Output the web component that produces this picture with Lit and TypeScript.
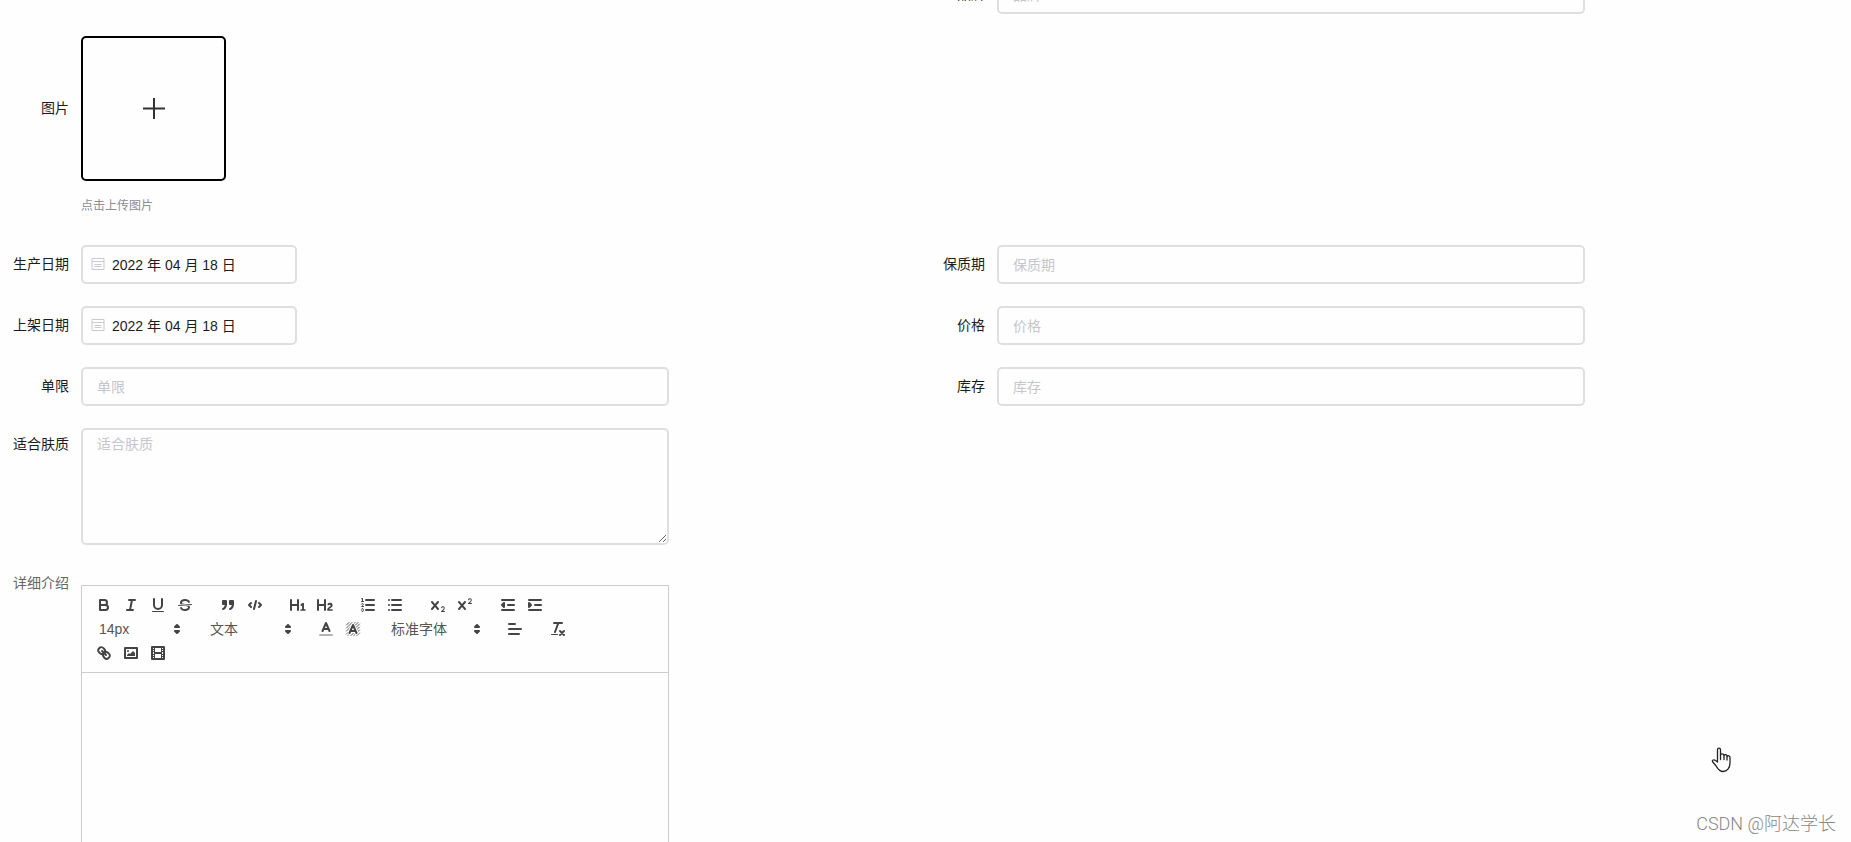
import { LitElement, html, css, svg, type SVGTemplateResult } from "lit";
import { customElement, property } from "lit/decorators.js";

const X_MARK =
  "M9.65,5.241a1,1,0,0,0-1.409.108L6,7.964,3.759,5.349A1,1,0,0,0,2.192,6.592Q2.215,6.621,2.241,6.649L4.684,9.5,2.241,12.35A1,1,0,0,0,3.71,13.707q.026-.028.049-.057L6,11.036,8.241,13.65a1,1,0,1,0,1.567-1.243Q9.785,12.378,9.759,12.35L7.316,9.5,9.759,6.651A1,1,0,0,0,9.65,5.241Z";
const SMALL_TWO =
  "M15.5,15H13.861a3.858,3.858,0,0,0,1.914-2.975,1.8,1.8,0,0,0-1.6-1.751A1.921,1.921,0,0,0,12.021,11.7a.5.5,0,1,0,.957.291h0a.914,.914,0,0,1,1.053-.725,.81,.81,0,0,1,.744.762c0,1.076-1.17,1.87-1.94,2.431A1.456,1.456,0,0,0,12,15.5a.5,.5,0,0,0,.5.5h3A.5,.5,0,0,0,15.5,15Z";

const ICONS: Record<string, SVGTemplateResult> = {
  bold: svg`<path class="s" d="M5,4H9.5a2.5,2.5,0,0,1,0,5H5Z"/><path class="s" d="M5,9h5.5a2.5,2.5,0,0,1,0,5H5Z"/>`,
  italic: svg`<path class="s" d="M7,4H13M5,14H11M8,14L10,4"/>`,
  underline: svg`<path class="s" d="M5,3V9a4,4,0,0,0,8,0V3"/><rect class="f" height="1" rx=".5" width="12" x="3" y="15"/>`,
  strike: svg`<path class="s thin" d="M15.5,8.5L2.5,9.5"/><path class="f" d="M9.007,8C6.542,7.791,6,7.519,6,6.5,6,5.792,7.283,5,9,5c1.571,0,2.765.679,2.969,1.309a1,1,0,0,0,1.9-.617C13.356,4.106,11.354,3,9,3,6.2,3,4,4.538,4,6.5a3.2,3.2,0,0,0,.5,1.843Z"/><path class="f" d="M8.984,10C11.457,10.208,12,10.479,12,11.5c0,.708-1.283,1.5-3,1.5-1.571,0-2.765-.679-2.969-1.309a1,1,0,1,0-1.9.617C4.644,13.894,6.646,15,9,15c2.8,0,5-1.538,5-3.5a3.2,3.2,0,0,0-.5-1.843Z"/>`,
  quote: svg`<rect class="s f" height="3" width="3" x="4" y="5"/><rect class="s f" height="3" width="3" x="11" y="5"/><path class="s f" d="M7,8c0,4.031-3,5-3,5"/><path class="s f" d="M14,8c0,4.031-3,5-3,5"/>`,
  code: svg`<path class="s" d="M5,7L3,9L5,11M13,7L15,9L13,11M10,5L8,13"/>`,
  h1: svg`<path class="f" d="M10,4V14a1,1,0,0,1-2,0V10H3v4a1,1,0,0,1-2,0V4A1,1,0,0,1,3,4V8H8V4a1,1,0,0,1,2,0Zm6.068,9.209H14.99V7.599a.541.541,0,0,0-.605-.606h-.627a1.011,1.011,0,0,0-.748.297L11.645,8.566a.544.544,0,0,0-.022.859l.286.307a.539.539,0,0,0,.847.033l.099-.088a1.214,1.214,0,0,0,.242-.352h.022s-.011.309-.011.605V13.209H12.041a.541.541,0,0,0-.605.605v.439a.541.541,0,0,0,.605.606h4.027a.541.541,0,0,0,.605-.606v-.439A.541.541,0,0,0,16.068,13.209Z"/>`,
  h2: svg`<path class="f" d="M16.74,13.814v.44a.541.541,0,0,1-.605.605H11.855a.584.584,0,0,1-.649-.605V14.013c0-2.906,3.4-3.422,3.4-4.555a.777.777,0,0,0-.848-.781,1.177,1.177,0,0,0-.835.384c-.275.264-.561.374-.858.132l-.43-.341c-.308-.242-.385-.517-.154-.814a2.972,2.972,0,0,1,2.454-1.177,2.454,2.454,0,0,1,2.684,2.41c0,2.453-3.18,2.926-3.279,3.938h2.795A.541.541,0,0,1,16.74,13.814ZM9,3A1,1,0,0,0,8,4V8H3V4A1,1,0,0,0,1,4V14a1,1,0,0,0,2,0V10H8v4a1,1,0,0,0,2,0V4A1,1,0,0,0,9,3Z"/>`,
  ordered: svg`<path class="s" d="M7,4H15M7,9H15M7,14H15"/><path class="s thin" d="M2.5,5.5H4.5"/><path class="f" d="M3.5,6A.5,.5,0,0,1,3,5.5V3.085l-.276.138A.5,.5,0,0,1,2.053,3c-.124-.247-.023-.324.224-.447l1-.5A.5,.5,0,0,1,4,2.5v3A.5,.5,0,0,1,3.5,6Z"/><path class="s thin" d="M4.5,10.5h-2c0-.234,1.85-1.076,1.85-2.234A.959,.959,0,0,0,2.5,8.156"/><path class="s thin" d="M2.5,14.846a.959,.959,0,0,0,1.85-.109A.7,.7,0,0,0,3.75,14a.688,.688,0,0,0,.6-.736,.959,.959,0,0,0-1.85-.109"/>`,
  bullet: svg`<path class="s" d="M6,4H15M6,9H15M6,14H15M3,4H3.01M3,9H3.01M3,14H3.01"/>`,
  sub: svg`<path class="f" d=${SMALL_TWO}/><path class="f" d=${X_MARK}/>`,
  sup: svg`<path class="f" transform="translate(0 -8)" d=${SMALL_TWO}/><path class="f" d=${X_MARK}/>`,
  outdent: svg`<path class="s" d="M3,14H15M3,4H15M9,9H15"/><path class="s f" d="M5,7V11L3,9Z"/>`,
  indent: svg`<path class="s" d="M3,14H15M3,4H15M9,9H15"/><path class="s f" d="M3,7V11L5,9Z"/>`,
  color: svg`<path class="s pale" d="M3,15H15"/><path class="s" d="M5.5,11L9,3L12.5,11M11.63,9H6.38"/>`,
  background: svg`<path class="s hatch" d="M2.500,5L5,2.500M2.500,8L8,2.500M2.500,11L11,2.500M2.500,14L14,2.500M4,15.500L15.500,4M7,15.500L15.500,7M10,15.500L15.500,10M13,15.500L15.500,13"/><path class="s halo" d="M5.500,13L9,5L12.500,13M11.630,11H6.380"/><path class="s" d="M5.500,13L9,5L12.500,13M11.630,11H6.380"/>`,
  align: svg`<path class="s" d="M3,9H15M3,14H13M3,4H9"/>`,
  clean: svg`<path class="s" d="M5,3H13M6,12L9.35,3M11,11L15,15M15,11L11,15"/><rect class="f" height="1" rx=".5" width="7" x="2" y="14"/>`,
  link: svg`<path class="s" d="M7,7L11,11"/><path class="s" d="M8.9,4.577a3.476,3.476,0,0,1,.36,4.679A3.476,3.476,0,0,1,4.577,8.9C3.185,7.5,2.035,6.4,4.217,4.217S7.5,3.185,8.9,4.577Z"/><path class="s" d="M13.423,9.1a3.476,3.476,0,0,0-4.679-.36,3.476,3.476,0,0,0,.36,4.679c1.392,1.392,2.5,2.542,4.679.36S14.815,10.5,13.423,9.1Z"/>`,
  image: svg`<rect class="s" height="10" width="12" x="3" y="4"/><circle class="f" cx="6" cy="7" r="1"/><path class="f" d="M5,12V11L7,9L8,10L11,7L13,9V12Z"/>`,
  video: svg`<rect class="s" height="12" width="12" x="3" y="3"/><path class="f" d="M5,3h1V15H5ZM12,3h1V15H12ZM5,8H13v2H5ZM3,5H6V6H3ZM3,7H6V8H3ZM3,10H6V11H3ZM3,12H6V13H3ZM12,5h3V6H12ZM12,7h3V8H12ZM12,10h3V11H12ZM12,12h3V13H12Z"/>`,
};

const base = css`
  * {
    box-sizing: border-box;
  }
  button,
  input,
  textarea,
  select {
    margin: 0;
    font: inherit;
    color: inherit;
    background: none;
    outline: none;
  }
`;

@customElement("form-row")
class FormRow extends LitElement {
  static styles = css`
    :host {
      display: grid;
      grid-template-columns: 81px 50fr 21fr;
    }
  `;
  render() {
    return html`<slot name="label"></slot><slot></slot>`;
  }
}

@customElement("rich-editor")
class RichEditor extends LitElement {
  static styles = [
    base,
    css`
      :host {
        display: block;
        border: 1px solid #ccc;
        color: #444;
      }
      .toolbar {
        display: flex;
        flex-wrap: wrap;
        padding: 7px 7px 7px 9px;
        border-bottom: 1px solid #ccc;
      }
      .group {
        display: flex;
        margin-right: 16px;
      }
      .tool {
        display: block;
        width: 27px;
        height: 24px;
        padding: 3px 4px;
        border: 0;
      }
      .icon {
        display: block;
        width: 18px;
        height: 18px;
      }
      .s {
        fill: none;
        stroke: #444;
        stroke-width: 2;
        stroke-linecap: round;
        stroke-linejoin: round;
      }
      .thin {
        stroke-width: 1;
      }
      .hatch {
        stroke-width: 0.9;
      }
      .halo {
        stroke: #fefefe;
        stroke-width: 4;
      }
      .pale {
        opacity: 0.4;
      }
      .f {
        fill: #444;
      }
      .picker {
        display: grid;
        width: 95px;
        height: 24px;
      }
      .picker.wide {
        width: 103px;
      }
      .picker > * {
        grid-area: 1 / 1;
      }
      .picker select {
        appearance: none;
        width: 100%;
        border: 0;
        padding: 0 8px;
        font-size: 14px;
        line-height: 24px;
        color: #555;
      }
      .arrow {
        justify-self: end;
        align-self: center;
        width: 18px;
        height: 18px;
        pointer-events: none;
      }
      .content {
        min-height: 320px;
        padding: 12px 15px;
        outline: none;
      }
    `,
  ];

  private group(...names: string[]) {
    return html`<span class="group"
      >${names.map(
        (n) => html`<button class="tool" type="button" aria-label=${n}>
          <svg class="icon" viewBox="0 0 18 18">${ICONS[n]}</svg>
        </button>`
      )}</span
    >`;
  }

  private picker(name: string, value: string, wide = false) {
    return html`<span class="group"
      ><span class="picker ${wide ? "wide" : ""}">
        <select aria-label=${name}>
          <option>${value}</option>
        </select>
        <svg class="arrow" viewBox="0 0 18 18">
          <path class="s f" d="M7,11L9,13L11,11Z" />
          <path class="s f" d="M7,7L9,5L11,7Z" />
        </svg> </span
    ></span>`;
  }

  render() {
    return html`
      <div class="toolbar" role="toolbar">
        ${this.group("bold", "italic", "underline", "strike")}
        ${this.group("quote", "code")} ${this.group("h1", "h2")}
        ${this.group("ordered", "bullet")} ${this.group("sub", "sup")}
        ${this.group("outdent", "indent")} ${this.picker("size", "14px")}
        ${this.picker("header", "文本")}
        ${this.group("color", "background")}
        ${this.picker("font", "标准字体", true)} ${this.group("align")}
        ${this.group("clean")} ${this.group("link", "image", "video")}
      </div>
      <div class="content" contenteditable="true"></div>
    `;
  }
}

@customElement("app-root")
class AppRoot extends LitElement {
  @property() date = "2022 年 04 月 18 日";

  static styles = [
    base,
    css`
      :host {
        display: block;
        position: relative;
        height: 100vh;
        overflow: hidden;
        background: #fefefe;
        color: #1c1c1c;
        font: 14px/20px "Liberation Sans", "Noto Sans CJK SC", sans-serif;
      }
      .form {
        display: grid;
        grid-template-columns: 1fr 1fr;
        row-gap: 22px;
        margin-top: -25px;
        padding-right: 19px;
      }
      .right {
        grid-column: 2;
      }
      .left {
        grid-column: 1;
      }
      .label {
        padding-right: 12px;
        text-align: right;
        line-height: 38px;
        white-space: nowrap;
      }
      .label.tall {
        line-height: 144px;
      }
      .label.top {
        line-height: 32px;
      }
      .label.muted {
        color: #666;
      }
      .input {
        width: 100%;
        height: 39px;
        padding: 0 14px;
        border: 2px solid #dfdfdf;
        border-radius: 5px;
      }
      .area {
        display: block;
        width: 100%;
        height: 117px;
        padding: 4px 14px;
        border: 2px solid #dfdfdf;
        border-radius: 5px;
        resize: vertical;
      }
      ::placeholder {
        color: #c5c6cc;
        opacity: 1;
      }
      .date {
        display: flex;
        align-items: center;
        gap: 7px;
        width: 216px;
        height: 39px;
        padding: 0 8px;
        border: 2px solid #dfdfdf;
        border-radius: 5px;
      }
      .date input {
        flex: 1;
        min-width: 0;
        border: 0;
        padding: 0;
      }
      .calendar {
        flex: none;
        width: 14px;
        height: 16px;
      }
      .upload {
        display: grid;
        place-items: center;
        width: 145px;
        height: 145px;
        padding: 0;
        border: 2px solid #000;
        border-radius: 5px;
      }
      .plus {
        width: 22px;
        height: 22px;
      }
      .hint {
        margin: 13px 0 5px;
        font-size: 12px;
        line-height: 24px;
        color: #8c8c94;
      }
      rich-editor {
        margin-top: 18px;
      }
      .mark {
        position: absolute;
        right: 15px;
        bottom: 6px;
        font-family: Roboto, "Noto Sans CJK SC", sans-serif;
        font-size: 18px;
        font-weight: 300;
        line-height: 24px;
        color: #888;
      }
      .hand {
        position: absolute;
        right: 120px;
        bottom: 69px;
        width: 20px;
        height: 26px;
      }
    `,
  ];

  private field(id: string, label: string, side: string) {
    return html`<form-row class=${side}>
      <label class="label" slot="label" for=${id}>${label}</label>
      <input class="input" id=${id} placeholder=${label} />
    </form-row>`;
  }

  private dateField(id: string, label: string) {
    return html`<form-row class="left">
      <label class="label" slot="label" for=${id}>${label}</label>
      <div class="date">
        <svg class="calendar" viewBox="0 0 14 16" fill="none" stroke="#c9c9cf">
          <path d="M1,1.500H13V12.500H1ZM1,4.500H13M3.500,7.500H10.500M3.500,9.500H10.500" />
        </svg>
        <input id=${id} .value=${this.date} />
      </div>
    </form-row>`;
  }

  render() {
    return html`
      <form class="form">
        ${this.field("brand", "品牌", "right")}
        <form-row class="left">
          <label class="label tall" slot="label" for="picture">图片</label>
          <div>
            <button class="upload" id="picture" type="button">
              <svg class="plus" viewBox="0 0 22 22" stroke="#333" stroke-width="2">
                <path d="M0,10.500H22M11,0V21" />
              </svg>
            </button>
            <p class="hint">点击上传图片</p>
          </div>
        </form-row>
        ${this.dateField("made", "生产日期")}
        ${this.field("shelf", "保质期", "right")}
        ${this.dateField("listed", "上架日期")}
        ${this.field("price", "价格", "right")}
        ${this.field("limit", "单限", "left")}
        ${this.field("stock", "库存", "right")}
        <form-row class="left">
          <label class="label top" slot="label" for="skin">适合肤质</label>
          <textarea class="area" id="skin" placeholder="适合肤质"></textarea>
        </form-row>
        <form-row class="left">
          <span class="label top muted" slot="label">详细介绍</span>
          <rich-editor></rich-editor>
        </form-row>
      </form>
      <svg class="hand" viewBox="0 0 20 26" fill="#fff" stroke="#222" stroke-width="1.3" stroke-linejoin="round" stroke-linecap="round">
        <path d="M6.500,15V3C6.500,.6,9.500,.6,9.500,3V8C10,6.300,13,6.500,13,8.500C13.800,7,16,7.400,16,9.300C17,8,19,8.800,19,10.500V16C19,21,16,24.500,12,24.500C8,24.500,6.800,21.500,4.800,18.500L1.600,14.800C.6,13,3,12.300,4.200,13.300Z" />
        <path fill="none" d="M9.500,8V12.500M13,8.500V12.500M16,9.500V13" />
      </svg>
      <div class="mark">CSDN @阿达学长</div>
    `;
  }
}
